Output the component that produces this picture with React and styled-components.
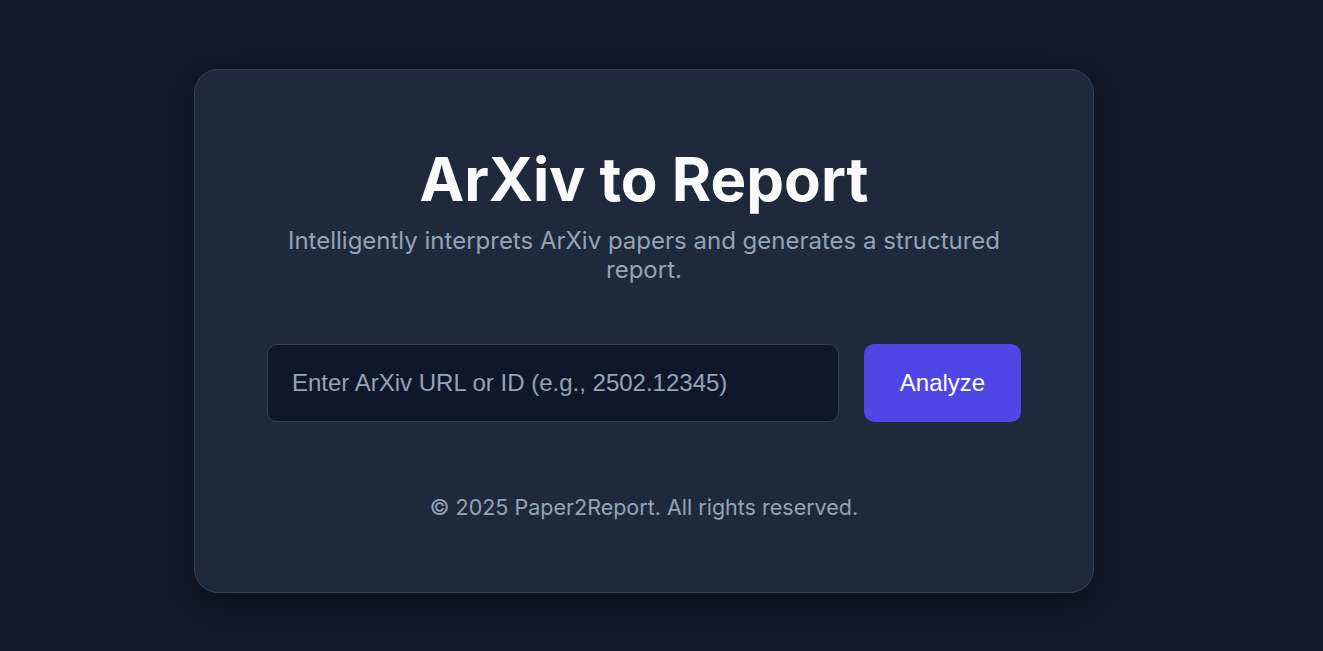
import React from 'react';
import styled, {createGlobalStyle} from 'styled-components';

const GlobalStyle = createGlobalStyle`
  * {
    box-sizing: border-box;
  }
  html, body {
    margin: 0;
    padding: 0;
    background: #111827;
  }
  body {
    font-family: Inter, "Noto Sans", sans-serif;
  }
`;

const App = () => {
  return (
    <>
      <GlobalStyle/>
      <Page>
        <Card>
          <Title>ArXiv to Report</Title>
          <Subtitle>
            Intelligently interprets ArXiv papers and generates a structured report.
          </Subtitle>
          <Form onSubmit={e => e.preventDefault()}>
            <UrlInput type="text" placeholder="Enter ArXiv URL or ID (e.g., 2502.12345)"/>
            <AnalyzeButton type="submit">Analyze</AnalyzeButton>
          </Form>
          <Footer>© 2025 Paper2Report. All rights reserved.</Footer>
        </Card>
      </Page>
    </>
  );
};

export default App;

const Page = styled.div`
  min-height: 100vh;
  display: flex;
  justify-content: flex-start;
  align-items: flex-start;
  padding: 69px 0 0 194px;
`;

const Card = styled.div`
  width: 900px;
  background: #1e293b;
  border: 1px solid #334155;
  border-radius: 24px;
  padding: 73px 72px 71px;
  display: flex;
  flex-direction: column;
  align-items: center;
  box-shadow: 0 10px 25px rgba(0, 0, 0, 0.25);
`;

const Title = styled.h1`
  margin: 0;
  font-size: 60px;
  line-height: 72px;
  font-weight: 700;
  color: #f8fafc;
`;

const Subtitle = styled.p`
  margin: 11px 0 0;
  max-width: 754px;
  text-align: center;
  font-size: 24px;
  line-height: 29px;
  color: #94a3b8;
`;

const Form = styled.form`
  margin-top: 60px;
  width: 754px;
  display: flex;
  gap: 25px;
`;

const UrlInput = styled.input`
  flex: 1;
  height: 78px;
  padding: 0 24px;
  background: #0f172a;
  border: 1px solid #334155;
  border-radius: 10px;
  color: #e2e8f0;
  font-family: "Liberation Sans", Arial, sans-serif;
  font-size: 24px;
  outline: none;

  &::placeholder {
    color: #94a3b8;
  }
`;

const AnalyzeButton = styled.button`
  width: 157px;
  height: 78px;
  border: none;
  border-radius: 10px;
  background: #4f46e5;
  color: #ffffff;
  font-family: "Liberation Sans", Arial, sans-serif;
  font-size: 24px;
  cursor: pointer;
`;

const Footer = styled.p`
  margin: 71px 0 0;
  font-size: 21.5px;
  line-height: 28px;
  color: #94a3b8;
`;
